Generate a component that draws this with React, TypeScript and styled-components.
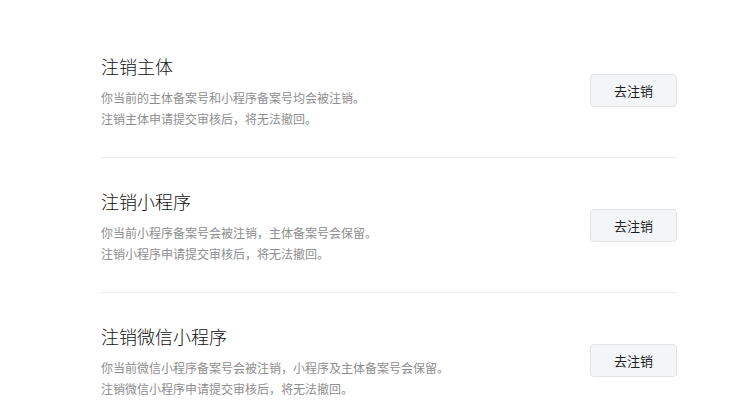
import React from "react";
import styled, { createGlobalStyle } from "styled-components";

const GlobalStyle = createGlobalStyle`
  html, body {
    margin: 0;
    padding: 0;
    background: #ffffff;
  }
  body {
    font-family: "Noto Sans CJK SC", "Noto Sans", sans-serif;
    -webkit-font-smoothing: antialiased;
  }
`;

const Page = styled.div`
  padding: 23px 0 0 101px;
  width: 576px;
`;

const Section = styled.section`
  display: flex;
  align-items: center;
  justify-content: space-between;
  padding: 30px 0 28px;
  border-bottom: 1px solid #ededed;
`;

const Info = styled.div`
  display: flex;
  flex-direction: column;
`;

const Title = styled.h3`
  margin: 0 0 8px;
  font-size: 18px;
  line-height: 26px;
  font-weight: 300;
  color: #111111;
`;

const Desc = styled.p`
  margin: 0;
  font-size: 12px;
  line-height: 21px;
  color: #8e8e8e;
`;

const Button = styled.button`
  width: 87px;
  height: 33px;
  margin-top: -2px;
  box-sizing: border-box;
  border: 1px solid #e3e4e6;
  border-radius: 4px;
  background: #f4f5f7;
  color: #1f1f1f;
  font-family: inherit;
  font-size: 13px;
  cursor: pointer;
  flex-shrink: 0;
`;

const items = [
  {
    title: "注销主体",
    lines: ["你当前的主体备案号和小程序备案号均会被注销。", "注销主体申请提交审核后，将无法撤回。"],
  },
  {
    title: "注销小程序",
    lines: ["你当前小程序备案号会被注销，主体备案号会保留。", "注销小程序申请提交审核后，将无法撤回。"],
  },
  {
    title: "注销微信小程序",
    lines: [
      "你当前微信小程序备案号会被注销，小程序及主体备案号会保留。",
      "注销微信小程序申请提交审核后，将无法撤回。",
    ],
  },
];

export default function App() {
  return (
    <>
      <GlobalStyle />
      <Page>
        {items.map((it) => (
          <Section key={it.title}>
            <Info>
              <Title>{it.title}</Title>
              <Desc>
                {it.lines[0]}
                <br />
                {it.lines[1]}
              </Desc>
            </Info>
            <Button>去注销</Button>
          </Section>
        ))}
      </Page>
    </>
  );
}
